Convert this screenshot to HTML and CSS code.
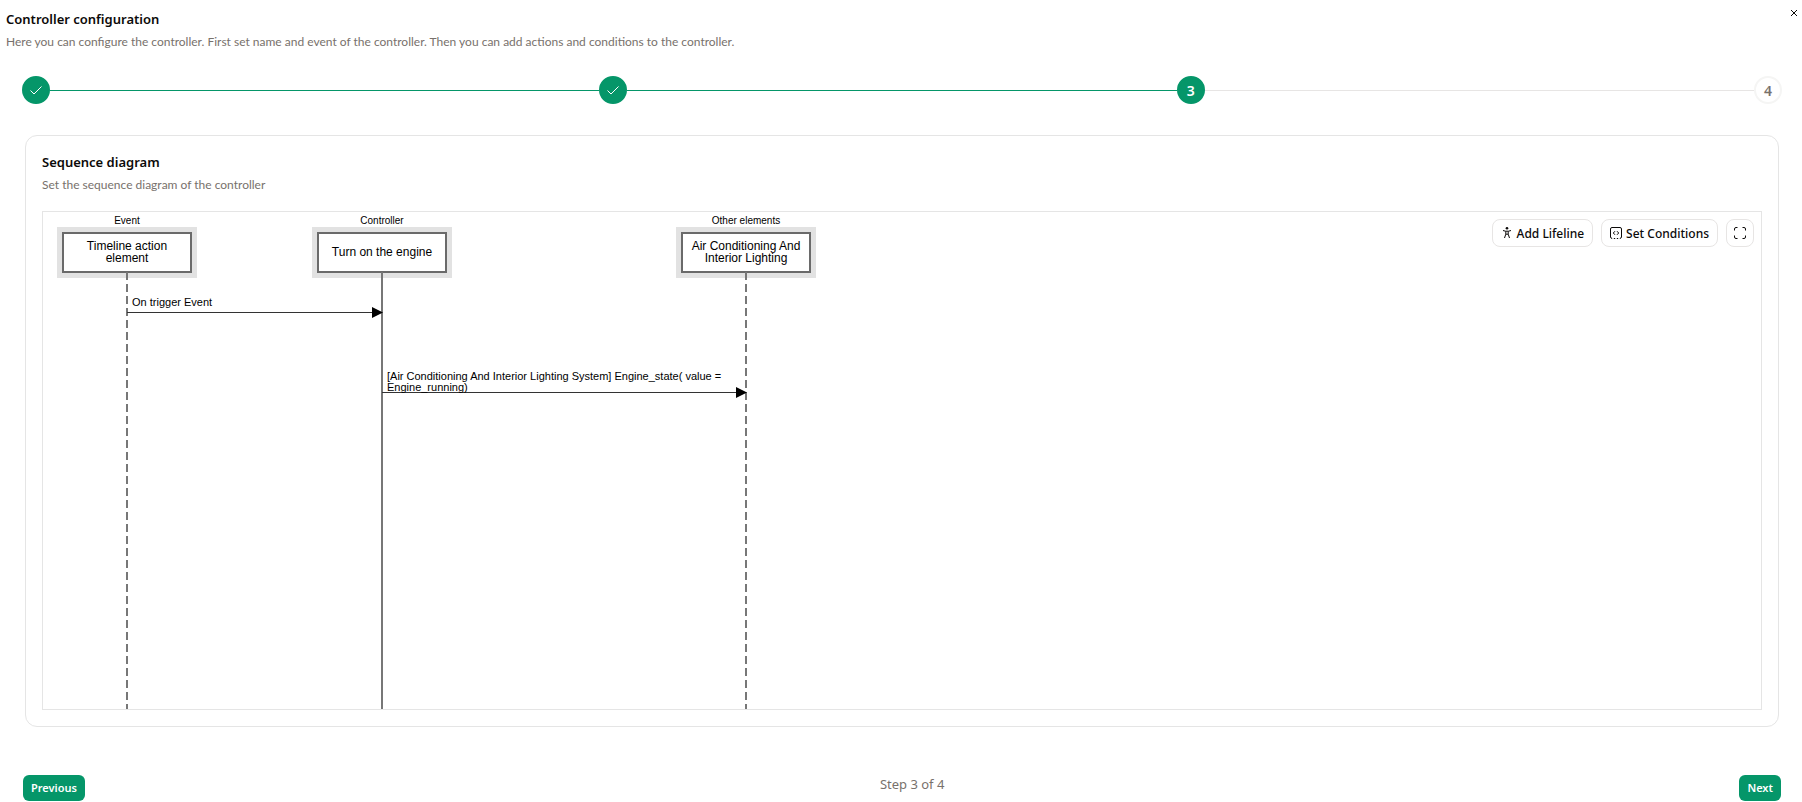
FILE: index.html
```html
<!DOCTYPE html>
<html lang="en">
<head>
<meta charset="utf-8">
<title>Controller configuration</title>
<link rel="stylesheet" href="styles.css">
</head>
<body>
<main class="dialog">
  <header class="dialog-header">
    <div>
      <h1 class="title">Controller configuration</h1>
      <p class="description">Here you can configure the controller. First set name and event of the controller. Then you can add actions and conditions to the controller.</p>
    </div>
    <button class="close" type="button" aria-label="Close">
      <svg width="8" height="8" viewBox="0 0 8 8"><path d="M1 1l6 6M7 1L1 7"/></svg>
    </button>
  </header>

  <div class="stepper">
    <button class="step done" type="button" aria-label="Step 1">
      <svg width="14" height="14" viewBox="0 0 14 14"><path d="M1.500 7.500l3.500 3.500 7.500-7.500"/></svg>
    </button>
    <span class="track reached"></span>
    <button class="step done" type="button" aria-label="Step 2">
      <svg width="14" height="14" viewBox="0 0 14 14"><path d="M1.500 7.500l3.500 3.500 7.500-7.500"/></svg>
    </button>
    <span class="track reached"></span>
    <button class="step done" type="button">3</button>
    <span class="track"></span>
    <button class="step" type="button">4</button>
  </div>

  <section class="card">
    <h2 class="title">Sequence diagram</h2>
    <p class="description">Set the sequence diagram of the controller</p>
    <div class="canvas">
      <svg class="diagram" role="img" aria-label="Sequence diagram">
        <g class="heads">
          <rect class="halo" x="14" y="15" width="140" height="51"/>
          <rect class="box" x="20" y="21" width="128" height="39"/>
          <rect class="halo" x="269" y="15" width="140" height="51"/>
          <rect class="box" x="275" y="21" width="128" height="39"/>
          <rect class="halo" x="633" y="15" width="140" height="51"/>
          <rect class="box" x="639" y="21" width="128" height="39"/>
        </g>
        <g class="lifelines">
          <line class="dashed" x1="84" y1="60" x2="84" y2="100%"/>
          <line x1="339" y1="60" x2="339" y2="100%"/>
          <line class="dashed" x1="703" y1="60" x2="703" y2="100%"/>
        </g>
        <g class="kinds">
          <text x="84" y="12">Event</text>
          <text x="339" y="12">Controller</text>
          <text x="703" y="12">Other elements</text>
        </g>
        <g class="names">
          <text x="84" y="38">Timeline action</text>
          <text x="84" y="50">element</text>
          <text x="339" y="44">Turn on the engine</text>
          <text x="703" y="38">Air Conditioning And</text>
          <text x="703" y="50">Interior Lighting</text>
        </g>
        <g class="messages">
          <line x1="84" y1="100.5" x2="330" y2="100.5"/>
          <path d="M329 95l11 5.500-11 5.500z"/>
          <text x="89" y="94">On trigger Event</text>
          <line x1="339" y1="180.5" x2="694" y2="180.5"/>
          <path d="M693 175l11 5.500-11 5.500z"/>
          <text x="344" y="168">[Air Conditioning And Interior Lighting System] Engine_state( value =</text>
          <text x="344" y="179">Engine_running)</text>
        </g>
      </svg>
      <div class="toolbar">
        <button class="tool" type="button">
          <svg width="12" height="14" viewBox="0 0 12 14"><circle class="solid" cx="6" cy="2.200" r="1.300"/><path d="M2 4.500l2.500.7h3l2.500-.7M4.800 5.200v3L3.500 12M7.200 5.200v3L8.500 12M4.800 8.200h2.400"/></svg>
          Add Lifeline
        </button>
        <button class="tool" type="button">
          <svg width="12" height="14" viewBox="1 0 12 14"><path d="M1.500 11V3q0-1.500 1.500-1.500h8q1.500 0 1.500 1.500v8M1.500 10.600q0 1.900 1.700 1.900M12.500 10.600q0 1.900-1.700 1.900M4.800 12.500h1.400M7.800 12.500h1.400M6 5.200L4.300 7 6 8.800M8 5.200L9.700 7 8 8.800"/></svg>
          Set Conditions
        </button>
        <button class="tool icon-only" type="button" aria-label="Full screen">
          <svg width="14" height="14" viewBox="0 0 14 14"><path d="M1.500 4.500V3q0-1.500 1.500-1.500h1.500M9.500 1.500H11q1.500 0 1.500 1.500v1.500M12.500 9.500V11q0 1.500-1.500 1.500H9.500M4.500 12.500H3q-1.500 0-1.500-1.500V9.500"/></svg>
        </button>
      </div>
    </div>
  </section>

  <footer class="dialog-footer">
    <button class="primary" type="button">Previous</button>
    <p class="progress">Step 3 of 4</p>
    <button class="primary" type="button">Next</button>
  </footer>
</main>
</body>
</html>
```
FILE: styles.css
```css
* {
  box-sizing: border-box;
}

body {
  margin: 0;
  background: #fff;
  color: #0c0a09;
  font-family: "Noto Sans", "Open Sans", sans-serif;
  font-size: 12px;
}

button {
  font: inherit;
  color: inherit;
  cursor: pointer;
}

svg {
  display: block;
  fill: none;
  stroke: currentColor;
}

h1, h2, p {
  margin: 0;
}

.dialog {
  display: flex;
  flex-direction: column;
  min-height: 100vh;
  padding-bottom: 1px;
}

.dialog-header {
  display: flex;
  justify-content: space-between;
  align-items: flex-start;
  padding: 8px 4px 0 6px;
}

.title {
  font-size: 13px;
  font-weight: 600;
  line-height: 22px;
}

.description {
  padding-top: 2px;
  color: #78716c;
  font-family: Lato, "Open Sans", sans-serif;
  line-height: 20px;
}

.close {
  padding: 1px 0;
  border: 0;
  background: none;
}

.stepper {
  display: flex;
  align-items: center;
  padding: 24px 20px 0 22px;
}

.step {
  display: grid;
  place-items: center;
  width: 28px;
  height: 28px;
  padding: 0;
  border: 2px solid #f5f5f4;
  border-radius: 50%;
  background: #fff;
  color: #78716c;
  font-size: 14px;
  font-weight: 600;
}

.step.done {
  border-color: #059669;
  background: #059669;
  color: #fff;
}

.track {
  flex: 1;
  height: 1px;
  background: #e7e5e4;
}

.track.reached {
  background: #059669;
}

.card {
  display: flex;
  flex: 1;
  flex-direction: column;
  margin: 31px 23px 0 25px;
  padding: 15px 16px 16px;
  border: 1px solid #e5e5e5;
  border-radius: 12px;
}

.canvas {
  position: relative;
  flex: 1;
  min-height: 320px;
  margin-top: 16px;
  border: 1px solid #e5e5e5;
}

.diagram {
  position: absolute;
  width: 100%;
  height: 100%;
  stroke: none;
  font-family: "Liberation Sans", Arial, sans-serif;
}

.lifelines line {
  stroke: #777;
  stroke-width: 2;
}

.lifelines .dashed {
  stroke-dasharray: 8 4;
}

.halo {
  fill: #e2e2e2;
}

.box {
  fill: #fff;
  stroke: #6a6a6a;
  stroke-width: 2;
}

.kinds, .names {
  fill: #000;
  text-anchor: middle;
}

.kinds {
  font-size: 10px;
}

.names {
  font-size: 12px;
}

.messages {
  fill: #000;
  font-size: 11px;
}

.messages line {
  stroke: #333;
}

.toolbar {
  position: absolute;
  top: 7px;
  right: 7px;
  display: flex;
  gap: 8px;
}

.tool {
  display: flex;
  align-items: center;
  gap: 4px;
  height: 28px;
  padding: 0 8px;
  border: 1px solid #e7e5e4;
  border-radius: 8px;
  background: #fff;
  font-weight: 500;
  white-space: nowrap;
}

.icon-only {
  justify-content: center;
  width: 28px;
  padding: 0;
}

.solid {
  fill: currentColor;
  stroke: none;
}

.dialog-footer {
  display: flex;
  justify-content: space-between;
  align-items: flex-start;
  padding: 48px 21px 0 23px;
}

.primary {
  height: 26px;
  padding: 0 8px 1px;
  border: 0;
  border-radius: 6px;
  background: #059669;
  color: #fff;
  font-size: 11px;
  font-weight: 600;
}

.progress {
  color: #78716c;
  font-size: 13px;
  line-height: 18px;
}
```
